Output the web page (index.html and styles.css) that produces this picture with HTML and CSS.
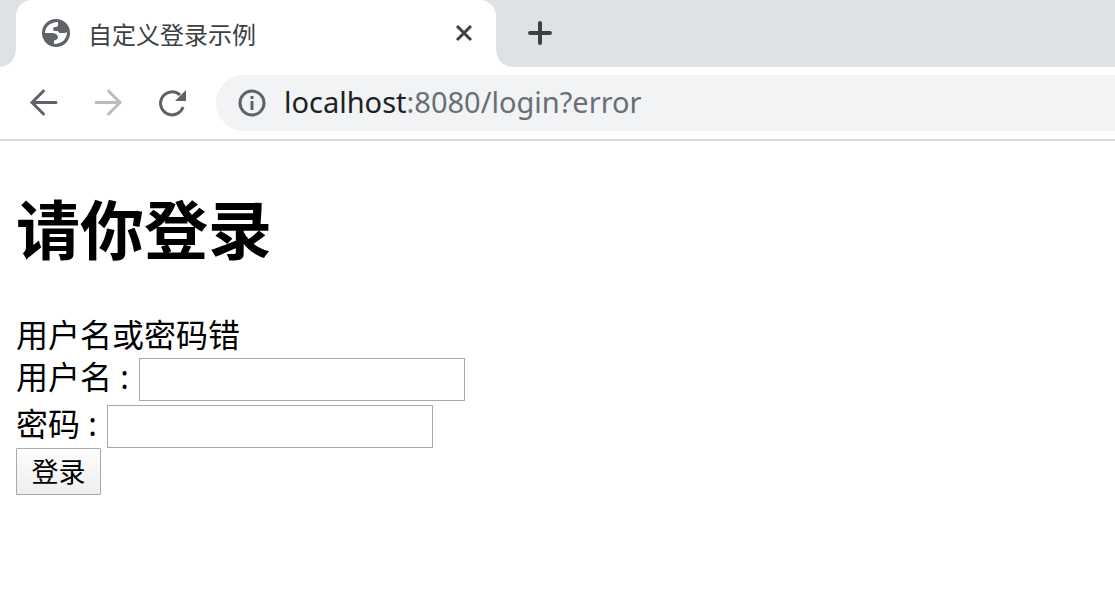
FILE: index.html
```html
<!DOCTYPE html>
<html lang="zh-CN">
<head>
<meta charset="utf-8">
<title>自定义登录示例</title>
<link rel="stylesheet" href="styles.css">
</head>
<body>
<header class="browser">
  <div class="tab-strip">
    <div class="tab">
      <svg class="globe" viewBox="0 0 28 28" aria-hidden="true"><circle cx="14" cy="14" r="14" fill="#5f6368"/><path d="M3 14C3 8 8 3 16 3V6Q16 8 13 8Q11 8 11 10Q11 12 13 12H15Q17 12 17 14H22Q24 14 25 13C25 20 20 25 12 25V22Q12 21 14 21Q16 20 16 18Q15 14 10 14Z" fill="#fff"/></svg>
      <span class="tab-title">自定义登录示例</span>
      <button class="icon-button tab-close" type="button" aria-label="关闭"><svg width="18" height="18" viewBox="0 0 18 18"><path d="M2 2L16 16M16 2L2 16" stroke="#3c4043" stroke-width="3"/></svg></button>
    </div>
    <button class="icon-button new-tab" type="button" aria-label="新标签页"><svg width="24" height="24" viewBox="0 0 24 24"><path d="M12 2V22M2 12H22" stroke="#3c4043" stroke-width="4" stroke-linecap="round"/></svg></button>
  </div>
  <nav class="toolbar">
    <button class="icon-button" type="button" aria-label="后退"><svg width="32" height="32" viewBox="0 0 32 32"><path d="M28 15.500H5M15.500 4L4 15.500L15.500 27" fill="none" stroke="#5f6368" stroke-width="3" stroke-linecap="round"/></svg></button>
    <button class="icon-button" type="button" aria-label="前进" disabled><svg width="32" height="32" viewBox="0 0 32 32"><path d="M4 15.500H27M16.500 4L28 15.500L16.500 27" fill="none" stroke="#babcbe" stroke-width="3" stroke-linecap="round"/></svg></button>
    <button class="icon-button" type="button" aria-label="刷新"><svg width="32" height="32" viewBox="0 0 32 32"><path d="M27 20A11.500 11.500 0 1 1 24 8" fill="none" stroke="#5f6368" stroke-width="3"/><path d="M30 3V14H19Z" fill="#5f6368"/></svg></button>
    <div class="address">
      <svg class="info" viewBox="0 0 28 28" aria-hidden="true"><circle cx="14" cy="14" r="12" fill="none" stroke="#5f6368" stroke-width="3"/><path d="M14 7V10M14 12V21" stroke="#5f6368" stroke-width="3"/></svg>
      <span class="url"><span class="host">localhost</span>:8080/login?error</span>
    </div>
  </nav>
</header>
<main class="page">
  <h1 class="heading">请你登录</h1>
  <div class="message">用户名或密码错</div>
  <form class="form">
    <div class="field"><label for="user">用户名 :</label><input class="text" id="user" type="text"></div>
    <div class="field"><label for="pass">密码 :</label><input class="text" id="pass" type="password"></div>
    <button class="submit" type="submit">登录</button>
  </form>
</main>
</body>
</html>
```

FILE: styles.css
```css
* { box-sizing: border-box; }
body {
  margin: 0;
  background: #fff;
  color: #000;
  font-family: "Noto Sans", "Noto Sans CJK SC", sans-serif;
}
.browser { border-bottom: 2px solid #dadce0; }
.tab-strip {
  display: flex;
  height: 67px;
  background: #dee1e6;
  padding-left: 16px;
  overflow: hidden;
}
.tab {
  position: relative;
  display: flex;
  align-items: center;
  width: 480px;
  padding: 0 23px 1px 26px;
  background: #fff;
  border-radius: 16px 16px 0 0;
}
.tab::before,
.tab::after {
  content: "";
  position: absolute;
  bottom: 0;
  width: 16px;
  height: 16px;
}
.tab::before {
  right: 100%;
  background: radial-gradient(circle at 0 0, #dee1e6 15px, #fff 16px);
}
.tab::after {
  left: 100%;
  background: radial-gradient(circle at 100% 0, #dee1e6 15px, #fff 16px);
}
.globe { width: 28px; height: 28px; }
.tab-title {
  flex: 1;
  margin-left: 18px;
  padding-top: 3px;
  font-size: 24px;
  line-height: 32px;
  color: #3c4043;
}
.icon-button {
  display: flex;
  align-items: center;
  justify-content: center;
  padding: 0;
  border: 0;
  background: none;
}
.new-tab {
  margin-left: 32px;
  padding-bottom: 1px;
}
.toolbar {
  display: flex;
  align-items: center;
  gap: 32px;
  padding: 8px 0 8px 28px;
}
.address {
  flex: 1;
  display: flex;
  align-items: center;
  gap: 18px;
  height: 56px;
  margin-left: -4px;
  padding-left: 22px;
  background: #f1f3f4;
  border-radius: 28px 0 0 28px;
}
.info { width: 28px; height: 28px; }
.url {
  padding-bottom: 2px;
  font-size: 29px;
  line-height: 40px;
  color: #6b6e72;
}
.host { color: #202124; }
.page { padding: 45px 16px; }
.heading { margin: 0 0 39px; font-size: 64px; line-height: 88px; }
.message { font-size: 32px; line-height: 43px; }
.form { padding-top: 2px; }
.field {
  display: flex;
  align-items: flex-start;
  gap: 10px;
  font-size: 32px;
  line-height: 38px;
}
.field + .field { margin-top: 4px; }
.text {
  width: 326px;
  height: 43px;
  padding: 2px;
  border: 1px solid #a9a9a9;
  background: #fff;
  font-size: 27px;
}
.submit {
  display: block;
  width: 85px;
  height: 47px;
  padding: 0;
  border: 1px solid #a9a9a9;
  border-radius: 1px;
  background: linear-gradient(#fdfdfd, #eee);
  color: #000;
  font: 27px/40px "Noto Sans", "Noto Sans CJK SC", sans-serif;
}
```
